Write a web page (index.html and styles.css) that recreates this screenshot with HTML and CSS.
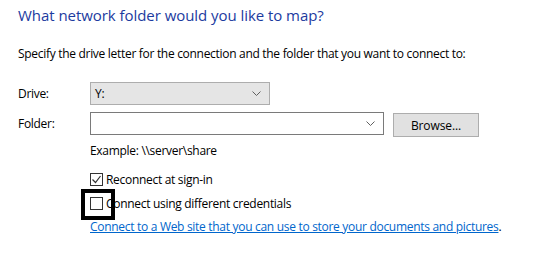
FILE: index.html
```html
<!DOCTYPE html>
<html>
<head>
<meta charset="utf-8">
<link rel="stylesheet" href="styles.css">
</head>
<body>
<div class="page">
  <h1 class="title">What network folder would you like to map?</h1>
  <p class="intro">Specify the drive letter for the connection and the folder that you want to connect to:</p>
  <div class="form">
    <div class="row">
      <span class="label">Drive:</span>
      <div class="combo drive">
        <span class="value">Y:</span>
        <svg class="chev" width="9" height="5" viewBox="0 0 9 5"><path d="M0.5 0.5 L4.5 4.5 L8.5 0.5" fill="none" stroke="#606060" stroke-width="1"/></svg>
      </div>
    </div>
    <div class="row">
      <span class="label">Folder:</span>
      <div class="combo folder">
        <span class="value"></span>
        <svg class="chev" width="9" height="5" viewBox="0 0 9 5"><path d="M0.5 0.5 L4.5 4.5 L8.5 0.5" fill="none" stroke="#606060" stroke-width="1"/></svg>
      </div>
      <button class="btn">Browse...</button>
    </div>
    <div class="options">
      <div class="example">Example: \\server\share</div>
      <label class="check first">
        <span class="box"><svg width="11" height="11" viewBox="0 0 11 11"><path d="M1.5 5.5 L4.5 8.5 L9.5 2" fill="none" stroke="#333" stroke-width="1.2"/></svg></span>
        <span>Reconnect at sign-in</span>
      </label>
      <label class="check second">
        <span class="box"><span class="highlight"></span></span>
        <span>Connect using different credentials</span>
      </label>
      <div class="linkline"><a class="link" href="#">Connect to a Web site that you can use to store your documents and pictures</a>.</div>
    </div>
  </div>
</div>
</body>
</html>
```
FILE: styles.css
```css
html, body {
  margin: 0;
  padding: 0;
  background: #ffffff;
}
body {
  font-family: "Open Sans", "Noto Sans", "Liberation Sans", sans-serif;
  font-size: 12px;
  color: #000;
  width: 536px;
  height: 280px;
  overflow: hidden;
  letter-spacing: -0.3px;
}
.page {
  padding: 4px 0 0 18px;
}
.title {
  margin: 0;
  font-weight: normal;
  font-size: 15px;
  line-height: 22px;
  color: #1c3ba0;
  letter-spacing: -0.05px;
}
.intro {
  margin: 19px 0 0 0;
  line-height: 18px;
}
.form {
  margin-top: 19px;
}
.row {
  display: flex;
  align-items: flex-start;
  height: 23px;
  margin-bottom: 7px;
}
.label {
  width: 72px;
  flex: none;
  line-height: 23px;
}
.combo {
  box-sizing: border-box;
  height: 23px;
  display: flex;
  align-items: center;
  justify-content: space-between;
  padding: 0 8px 0 4px;
  flex: none;
}
.drive {
  width: 180px;
  background: #e5e5e5;
  border: 1px solid #adadad;
}
.folder {
  width: 294px;
  background: #fff;
  border: 1px solid #7a7a7a;
}
.chev {
  display: block;
}
.btn {
  box-sizing: border-box;
  margin-left: 9px;
  width: 86px;
  height: 24px;
  margin-top: 1px;
  background: #e1e1e1;
  border: 1px solid #adadad;
  font: inherit;
  letter-spacing: -0.1px;
  color: #000;
  padding: 0;
}
.options {
  margin-left: 72px;
  margin-top: 6px;
}
.example {
  line-height: 18px;
}
.check {
  display: flex;
  align-items: center;
  gap: 3px;
  height: 18px;
}
.check.first {
  margin-top: 10px;
}
.check.second {
  margin-top: 6px;
}
.box {
  box-sizing: border-box;
  width: 13px;
  height: 13px;
  border: 1px solid #333;
  background: #fff;
  display: flex;
  align-items: center;
  justify-content: center;
  flex: none;
  position: relative;
}
.box svg {
  display: block;
}
.highlight {
  position: absolute;
  left: -10px;
  top: -9px;
  width: 34px;
  height: 31px;
  box-sizing: border-box;
  border: 4px solid #000;
}
.linkline {
  margin-top: 6px;
  line-height: 18px;
}
.link {
  color: #0066cc;
  text-decoration: underline;
}
```
